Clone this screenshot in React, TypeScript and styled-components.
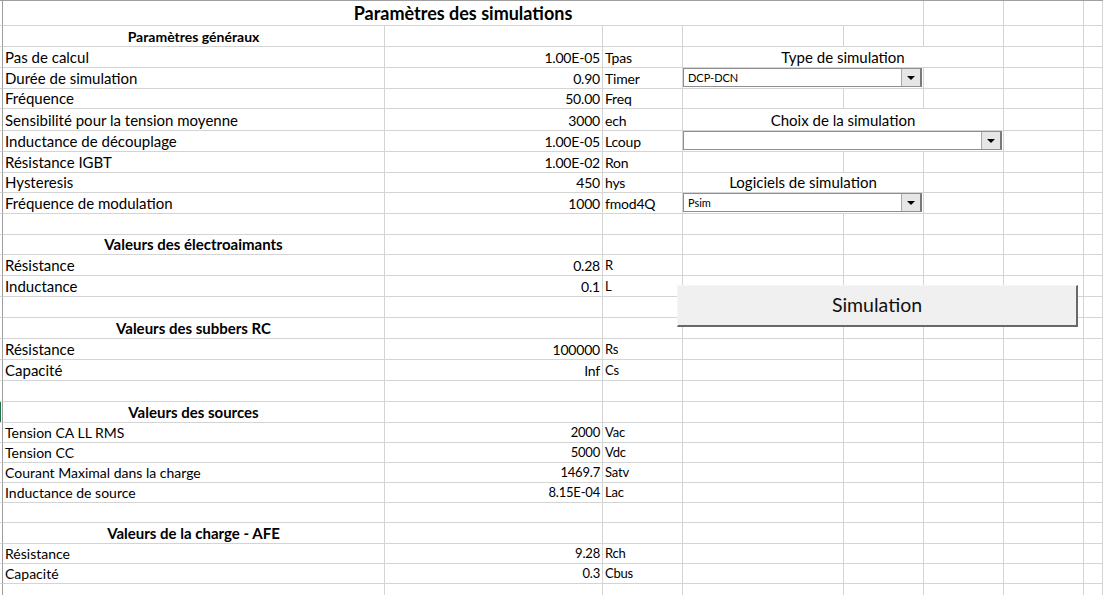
import styled, { createGlobalStyle, css } from "styled-components";

const GlobalStyle = createGlobalStyle`
  html, body {
    margin: 0;
    padding: 0;
    background: #ffffff;
    overflow: hidden;
  }
  body {
    font-family: "Lato", "Liberation Sans", sans-serif;
    color: #000000;
  }
`;

const GRID = "#d4d4d4";

const Sheet = styled.div`
  position: relative;
  width: 1103px;
  height: 595px;
  border-top: 1px solid #9e9e9e;
  box-sizing: border-box;
  overflow: hidden;
`;

const Row = styled.div<{ $h: number }>`
  display: grid;
  grid-template-columns: 3px 382px 218px 80px 161px 80px 80px 80px 1fr;
  height: ${(p) => p.$h}px;
`;

const base = css`
  box-sizing: border-box;
  border-right: 1px solid ${GRID};
  border-bottom: 1px solid ${GRID};
  display: flex;
  align-items: flex-end;
  white-space: nowrap;
  line-height: 17px;
  padding: 0 2px 1px;
`;

const Gutter = styled.div<{ $active?: boolean }>`
  box-sizing: border-box;
  border-right: 1px solid #9e9e9e;
  border-bottom: 1px solid ${GRID};
  background: ${(p) => (p.$active ? "#217346" : "#ffffff")};
  background-clip: content-box;
  padding-right: 1px;
`;

const Blank = styled.div<{ $span?: number }>`
  ${base};
  grid-column: span ${(p) => p.$span ?? 1};
`;

const Label = styled.div<{ $small?: boolean }>`
  ${base};
  font-size: ${(p) => (p.$small ? 14 : 15)}px;
`;

const Value = styled.div<{ $small?: boolean }>`
  ${base};
  justify-content: flex-end;
  font-size: ${(p) => (p.$small ? 13 : 14)}px;
  letter-spacing: -0.2px;
`;

const Unit = styled.div<{ $small?: boolean }>`
  ${base};
  font-size: ${(p) => (p.$small ? 13 : 14)}px;
  letter-spacing: -0.2px;
`;

const SectionTitle = styled.div<{ $size: number }>`
  ${base};
  justify-content: center;
  font-size: ${(p) => p.$size}px;
  font-weight: 700;
`;

const SheetTitle = styled.div`
  ${base};
  grid-column: span 5;
  justify-content: center;
  font-size: 18px;
  font-weight: 700;
  line-height: 22px;
`;

const Caption = styled.div<{ $span: number }>`
  ${base};
  grid-column: span ${(p) => p.$span};
  justify-content: center;
  font-size: 15px;
`;

const SelectCell = styled.div<{ $span: number }>`
  box-sizing: border-box;
  grid-column: span ${(p) => p.$span};
  border-right: 1px solid ${GRID};
  border-bottom: 1px solid ${GRID};
  padding: 0 1px 1px 0;
  display: flex;
`;

const Select = styled.div`
  flex: 1;
  box-sizing: border-box;
  display: flex;
  align-items: stretch;
  justify-content: space-between;
  background: #ffffff;
  border: 1px solid #8f8f8f;
  border-right: 2px solid #7a7a7a;
  font-size: 11px;
`;

const SelectText = styled.span`
  display: flex;
  align-items: center;
  padding-left: 4px;
`;

const SelectArrow = styled.span`
  width: 18px;
  display: flex;
  align-items: center;
  justify-content: center;
  background: #e6e6e6;
  border-left: 1px solid #a8a8a8;

  &::after {
    content: "";
    border-left: 4px solid transparent;
    border-right: 4px solid transparent;
    border-top: 4px solid #000000;
    margin-top: 1px;
  }
`;

const SimButton = styled.button`
  position: absolute;
  left: 677px;
  top: 284px;
  width: 401px;
  height: 42px;
  box-sizing: border-box;
  background: #f0f0f0;
  border: none;
  border-top: 1px solid #f6f6f6;
  border-left: 1px solid #f6f6f6;
  border-right: 2px solid #696969;
  border-bottom: 2px solid #696969;
  font-family: "Lato", "Liberation Sans", sans-serif;
  font-size: 19.5px;
  color: #111111;
  padding: 0 0 2px;
`;

type Side =
  | { kind: "caption"; span: number; text: string }
  | { kind: "select"; span: number; value: string };

type Line = {
  h: number;
  header?: string;
  headerSize?: number;
  label?: string;
  value?: string;
  unit?: string;
  small?: boolean;
  smallUnit?: boolean;
  side?: Side;
  active?: boolean;
};

const lines: Line[] = [
  { h: 21, header: "Paramètres généraux", headerSize: 14 },
  { h: 21, label: "Pas de calcul", value: "1.00E-05", unit: "Tpas", side: { kind: "caption", span: 3, text: "Type de simulation" } },
  { h: 21, label: "Durée de simulation", value: "0.90", unit: "Timer", side: { kind: "select", span: 2, value: "DCP-DCN" } },
  { h: 20, label: "Fréquence", value: "50.00", unit: "Freq" },
  { h: 22, label: "Sensibilité pour la tension moyenne", value: "3000", unit: "ech", side: { kind: "caption", span: 3, text: "Choix de la simulation" } },
  { h: 21, label: "Inductance de découplage", value: "1.00E-05", unit: "Lcoup", side: { kind: "select", span: 3, value: "" } },
  { h: 21, label: "Résistance IGBT", value: "1.00E-02", unit: "Ron" },
  { h: 20, label: "Hysteresis", value: "450", unit: "hys", side: { kind: "caption", span: 2, text: "Logiciels de simulation" } },
  { h: 21, label: "Fréquence de modulation", value: "1000", unit: "fmod4Q", side: { kind: "select", span: 2, value: "Psim" } },
  { h: 21 },
  { h: 20, header: "Valeurs des électroaimants" },
  { h: 21, label: "Résistance", value: "0.28", unit: "R", smallUnit: true },
  { h: 21, label: "Inductance", value: "0.1", unit: "L", smallUnit: true },
  { h: 21 },
  { h: 21, header: "Valeurs des subbers RC" },
  { h: 21, label: "Résistance", value: "100000", unit: "Rs", smallUnit: true },
  { h: 21, label: "Capacité", value: "Inf", unit: "Cs", smallUnit: true },
  { h: 21 },
  { h: 21, header: "Valeurs des sources", active: true },
  { h: 20, label: "Tension CA LL RMS", value: "2000", unit: "Vac", small: true },
  { h: 20, label: "Tension CC", value: "5000", unit: "Vdc", small: true },
  { h: 20, label: "Courant Maximal dans la charge", value: "1469.7", unit: "Satv", small: true },
  { h: 20, label: "Inductance de source", value: "8.15E-04", unit: "Lac", small: true },
  { h: 20 },
  { h: 21, header: "Valeurs de la charge - AFE" },
  { h: 20, label: "Résistance", value: "9.28", unit: "Rch", small: true },
  { h: 20, label: "Capacité", value: "0.3", unit: "Cbus", small: true },
  { h: 20 },
];

function SideCells({ side }: { side?: Side }) {
  const used = side ? side.span : 0;
  const rest = Array.from({ length: 5 - used }, (_, i) => <Blank key={i} />);
  return (
    <>
      {side?.kind === "caption" && <Caption $span={side.span}>{side.text}</Caption>}
      {side?.kind === "select" && (
        <SelectCell $span={side.span}>
          <Select>
            <SelectText>{side.value}</SelectText>
            <SelectArrow />
          </Select>
        </SelectCell>
      )}
      {rest}
    </>
  );
}

function App() {
  return (
    <>
      <GlobalStyle />
      <Sheet>
        <Row $h={25}>
          <Gutter />
          <SheetTitle>Paramètres des simulations</SheetTitle>
          <Blank />
          <Blank />
          <Blank />
        </Row>
        {lines.map((l, i) => (
          <Row key={i} $h={l.h}>
            <Gutter $active={l.active} />
            {l.header ? (
              <SectionTitle $size={l.headerSize ?? 15}>{l.header}</SectionTitle>
            ) : (
              <Label $small={l.small}>{l.label}</Label>
            )}
            <Value $small={l.small}>{l.value}</Value>
            <Unit $small={l.small || l.smallUnit}>{l.unit}</Unit>
            <SideCells side={l.side} />
          </Row>
        ))}
        <SimButton>Simulation</SimButton>
      </Sheet>
    </>
  );
}

export default App;
